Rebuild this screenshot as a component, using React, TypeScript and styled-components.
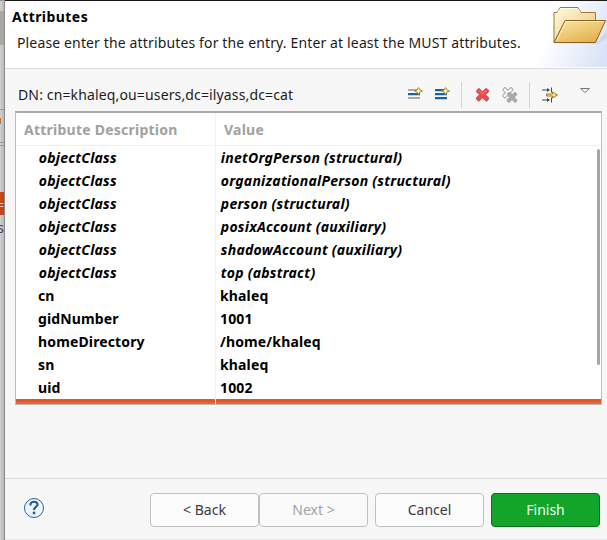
import React from 'react';
import styled, { createGlobalStyle } from 'styled-components';

const GlobalStyle = createGlobalStyle`
  * { box-sizing: border-box; }
  body { margin: 0; overflow: hidden; font: 14px/19px "Noto Sans", "Open Sans", sans-serif; color: #1c1c1c; }
`;

const Screen = styled.div`
  display: grid;
  grid-template-columns: 5px 1fr;
  width: 607px;
  height: 540px;
  overflow: hidden;
`;

const Backdrop = styled.div`
  display: flex;
  flex-direction: column;
  overflow: hidden;
  border-right: 1px solid #8a8a8a;
  border-top: 1px solid #999;
  background: linear-gradient(90deg, #d1d1d1, #b9b9b9);
`;

const Strip = styled.div<{ $height: number; $fill?: string; $line?: boolean }>`
  flex: none;
  height: ${(p) => p.$height}px;
  background: ${(p) => p.$fill ?? 'transparent'};
  border-bottom: ${(p) => (p.$line ? '1px solid #989898' : 'none')};
`;

const Clipped = styled.div<{ $selected?: boolean }>`
  flex: none;
  display: flex;
  justify-content: ${(p) => (p.$selected ? 'flex-start' : 'flex-end')};
  text-indent: ${(p) => (p.$selected ? -4 : 0)}px;
  height: 23px;
  line-height: 25px;
  color: ${(p) => (p.$selected ? '#e6d0c6' : '#3c4454')};
  background: ${(p) => (p.$selected ? 'linear-gradient(90deg, #ca4a1c, #b8441b)' : 'transparent')};
`;

const Dialog = styled.main`
  display: flex;
  flex-direction: column;
  min-width: 0;
  background: #f7f7f7;
  border-top: 1px solid #1b191b;
  border-bottom: 1px solid #e9e9e9;
`;

const Header = styled.header`
  flex: none;
  display: flex;
  justify-content: space-between;
  height: 68px;
  background: #fff;
  border-bottom: 1px solid #dadada;
`;

const Heading = styled.div`
  padding: 6px 0 0 7px;
  white-space: nowrap;
`;

const Title = styled.h1`
  margin: 0;
  font-size: 14px;
  line-height: 19px;
  letter-spacing: 0.44px;
  color: #000;
`;

const Message = styled.p`
  margin: 7px 0 0 5px;
  letter-spacing: 0.14px;
`;

const Banner = styled.svg`
  flex: none;
  width: 75px;
  height: 67px;
`;

const Toolbar = styled.div`
  flex: none;
  display: flex;
  align-items: center;
  height: 42px;
  padding: 10px 16px 0 13px;
`;

const EntryName = styled.span`
  flex: 1;
  margin-top: -2px;
  letter-spacing: 0.14px;
`;

const ToolIcon = styled.svg<{ $gap: number }>`
  flex: none;
  width: 16px;
  height: 16px;
  margin-left: ${(p) => p.$gap}px;
`;

const Divider = styled.i<{ $gap: number }>`
  width: 1px;
  height: 26px;
  margin-left: ${(p) => p.$gap}px;
  background: #d5d5d5;
`;

const TableFrame = styled.section`
  flex: none;
  display: grid;
  grid-template-rows: 33px 258px;
  width: 587px;
  height: 294px;
  margin-left: 10px;
  border: 1px solid #bcbcbc;
  border-top: 2px solid #aaa;
  background: #fff;
  overflow: hidden;
`;

const Columns = styled.div`
  display: grid;
  grid-template-columns: 200px 1fr;
`;

const HeaderRow = styled(Columns)`
  border-bottom: 1px solid #f1f1f1;
  font-weight: 700;
  line-height: 33px;
  letter-spacing: 0.24px;
  color: #a1a1a1;
`;

const HeaderCell = styled.div`
  padding-left: 8px;
  &:first-child { border-right: 1px solid #f1f1f1; }
`;

const Body = styled.div`
  display: grid;
  grid-template-columns: 1fr;
  overflow: hidden;
`;

const Rows = styled.div`
  grid-area: 1 / 1;
`;

const Cell = styled.div`
  padding-left: 4px;
  &:first-child { padding-left: 22px; border-right: 1px solid #f1f1f1; }
`;

const Row = styled(Columns)<{ $schema?: boolean }>`
  height: 23px;
  line-height: 23px;
  font-weight: 700;
  font-style: ${(p) => (p.$schema ? 'italic' : 'normal')};
  letter-spacing: ${(p) => (p.$schema ? 0.25 : 0.14)}px;
  text-indent: ${(p) => (p.$schema ? 0.8 : 0)}px;
  color: #000;
`;

const SelectedRow = styled(Columns)`
  height: 5px;
  background: linear-gradient(#e95420 0 3px, #df6a40 3px);
`;

const Scrollbar = styled.div`
  grid-area: 1 / 1;
  justify-self: end;
  width: 3px;
  height: 216px;
  margin: 3px 1px 0 0;
  border-radius: 2px;
  background: #a5a5a5;
`;

const Spacer = styled.div`
  flex: 1;
`;

const Footer = styled.footer`
  flex: none;
  display: flex;
  align-items: center;
  height: 61px;
  padding: 2px 7px 0 18px;
  border-top: 1px solid #dbdbdb;
`;

const HelpIcon = styled.svg`
  width: 22px;
  height: 22px;
  margin: -5px auto 0 0;
`;

const Button = styled.button<{ $gap?: number; $primary?: boolean }>`
  width: 109px;
  height: 34px;
  margin: 0 0 0 ${(p) => p.$gap ?? 0}px;
  padding: 0 0 2px;
  font: inherit;
  color: ${(p) => (p.$primary ? '#f3fbf4' : '#3b3b3b')};
  background: ${(p) => (p.$primary ? '#12a52a' : '#fcfcfc')};
  border: 1px solid ${(p) => (p.$primary ? '#0b711b' : '#c0c0c0')};
  border-radius: 4px;
  &:disabled { color: #a2a2a2; background: #fafafa; }
`;

const attributes: { name: string; value: string; schema?: boolean }[] = [
  { name: 'objectClass', value: 'inetOrgPerson (structural)', schema: true },
  { name: 'objectClass', value: 'organizationalPerson (structural)', schema: true },
  { name: 'objectClass', value: 'person (structural)', schema: true },
  { name: 'objectClass', value: 'posixAccount (auxiliary)', schema: true },
  { name: 'objectClass', value: 'shadowAccount (auxiliary)', schema: true },
  { name: 'objectClass', value: 'top (abstract)', schema: true },
  { name: 'cn', value: 'khaleq' },
  { name: 'gidNumber', value: '1001' },
  { name: 'homeDirectory', value: '/home/khaleq' },
  { name: 'sn', value: 'khaleq' },
  { name: 'uid', value: '1002' },
];

const FolderBanner = () => (
  <Banner viewBox="0 0 75 67">
    <defs>
      <linearGradient id="glow" gradientUnits="userSpaceOnUse" x1="22" y1="20" x2="78" y2="45">
        <stop offset="0" stopColor="#fff" />
        <stop offset="1" stopColor="#d9e2f6" />
      </linearGradient>
      <linearGradient id="back" x1="0" y1="0" x2="1" y2="1">
        <stop offset="0" stopColor="#fffbe2" />
        <stop offset="1" stopColor="#e9c56c" />
      </linearGradient>
      <linearGradient id="front" x1="0" y1="0" x2="0.7" y2="1">
        <stop offset="0" stopColor="#fae7a8" />
        <stop offset="1" stopColor="#e3b04b" />
      </linearGradient>
    </defs>
    <rect width="75" height="66" fill="url(#glow)" />
    <g transform="translate(-0.500 -1)">
      <path d="M23 43H65L76 30V38L66 44Z" fill="#c3c8dc" opacity=".5" />
      <path d="M22.500 42V12.500H25.500L28.500 7.500H46.500L49.500 12.500H64V42Z" fill="url(#back)" stroke="#a17b2b" />
      <path d="M26.500 12L29 8.500H46L48.500 12" fill="none" stroke="#fffbe8" />
      <path d="M22.500 42.500L33.500 20.500H74L64 42.500Z" fill="url(#front)" stroke="#89601e" />
      <path d="M25 41.500L34.500 21.500H72.500" fill="none" stroke="#fff3c2" strokeWidth=".8" />
    </g>
  </Banner>
);

const Sparkle = () => (
  <path d="M10.500 0.500L12 3L14.500 4L12 5L10.500 7.500L9 5L6.500 4L9 3Z" fill="#fff3b5" stroke="#a88722" />
);

const NewAttributeIcon = () => (
  <ToolIcon viewBox="0 0 16 16" $gap={0}>
    <path d="M0 3H12M0 11H12" stroke="#aaa" strokeWidth="2" />
    <path d="M0 7H12" stroke="#1762a4" strokeWidth="2" />
    <path d="M0 8.500H12" stroke="#b0d5ee" />
    <Sparkle />
  </ToolIcon>
);

const NewValueIcon = () => (
  <ToolIcon viewBox="0 0 16 16" $gap={11}>
    <path d="M0 3H12M0 7H12M0 11H12" stroke="#1762a4" strokeWidth="2" />
    <path d="M0 4.500H12M0 8.500H12M0 12.500H12" stroke="#b0d5ee" />
    <Sparkle />
  </ToolIcon>
);

const crossPath =
  'M1 2.500L3 0.500L6.500 4L10 0.500L12.500 2.500V4L9.500 7L12.500 10V11.500L10.500 13.500L6.500 10L3 13.500L0.500 11.500V10L3.500 7L0.500 4Z';

const DeleteIcon = () => (
  <ToolIcon viewBox="0 -0.8 16 16" $gap={14}>
    <path d={crossPath} fill="#e94b50" stroke="#d64548" />
    <path d="M2.500 2.500L6.500 6L10.500 2.500" stroke="#f28a8a" fill="none" />
  </ToolIcon>
);

const DeleteAllIcon = () => (
  <ToolIcon viewBox="0 0 16 16" $gap={10}>
    <path d={crossPath} fill="#f7f7f7" stroke="#aaa" strokeWidth="1.300" transform="translate(0.500 0) scale(.82)" />
    <path d={crossPath} fill="#aaa" stroke="#aaa" transform="translate(4.600 4.600) scale(.82)" />
  </ToolIcon>
);

const DefaultEditorIcon = () => (
  <ToolIcon viewBox="0 -0.5 16 16" $gap={12}>
    <path d="M0 2.500H7M0 12.500H7M9.500 0V5M9.500 10V15" stroke="#33475f" fill="none" />
    <path d="M5 0.500L8 2.500L5 4.500ZM5 10.500L8 12.500L5 14.500Z" fill="#33475f" />
    <path d="M4.500 6.500H10.500V4.500L15.500 7.500L10.500 10.500V8.500H4.500Z" fill="#ffe48e" stroke="#a7731a" />
  </ToolIcon>
);

const MenuIcon = () => (
  <ToolIcon viewBox="0 0 16 16" $gap={17}>
    <path d="M5.500 1.500H14.500L10 5.500Z" fill="#fff" stroke="#777" />
  </ToolIcon>
);

export default function App() {
  return (
    <>
      <GlobalStyle />
      <Screen>
        <Backdrop>
          <Strip $height={10} />
          <Strip $height={34} $fill="#aaa6a2" />
          <Strip $height={65} $line />
          <Strip $height={8} />
          <Strip $height={6} $fill="linear-gradient(90deg, #b96f35 1px, transparent 1px)" />
          <Strip $height={19} $line />
          <Strip $height={3} $line />
          <Strip $height={46} />
          <Clipped $selected>=o</Clipped>
          <Clipped>s</Clipped>
        </Backdrop>
        <Dialog>
          <Header>
            <Heading>
              <Title>Attributes</Title>
              <Message>Please enter the attributes for the entry. Enter at least the MUST attributes.</Message>
            </Heading>
            <FolderBanner />
          </Header>
          <Toolbar>
            <EntryName>DN: cn=khaleq,ou=users,dc=ilyass,dc=cat</EntryName>
            <NewAttributeIcon />
            <NewValueIcon />
            <Divider $gap={10} />
            <DeleteIcon />
            <DeleteAllIcon />
            <Divider $gap={11} />
            <DefaultEditorIcon />
            <MenuIcon />
          </Toolbar>
          <TableFrame>
            <HeaderRow>
              <HeaderCell>Attribute Description</HeaderCell>
              <HeaderCell>Value</HeaderCell>
            </HeaderRow>
            <Body>
              <Rows>
                {attributes.map((a, i) => (
                  <Row key={i} $schema={a.schema}>
                    <Cell>{a.name}</Cell>
                    <Cell>{a.value}</Cell>
                  </Row>
                ))}
                <SelectedRow>
                  <Cell />
                  <Cell />
                </SelectedRow>
              </Rows>
              <Scrollbar />
            </Body>
          </TableFrame>
          <Spacer />
          <Footer>
            <HelpIcon viewBox="0 0 22 22">
              <circle cx="11" cy="11" r="9.500" fill="#edf5fb" stroke="#2b6499" />
              <path d="M7.500 8.500V7.500C7.500 3.700 14.500 4 14.500 7.500C14.500 10 11 10 11 13" fill="none" stroke="#235f99" strokeWidth="2.200" />
              <circle cx="11" cy="16" r="1.400" fill="#235f99" />
            </HelpIcon>
            <Button>&lt; Back</Button>
            <Button disabled>Next &gt;</Button>
            <Button $gap={7}>Cancel</Button>
            <Button $gap={7} $primary>Finish</Button>
          </Footer>
        </Dialog>
      </Screen>
    </>
  );
}
